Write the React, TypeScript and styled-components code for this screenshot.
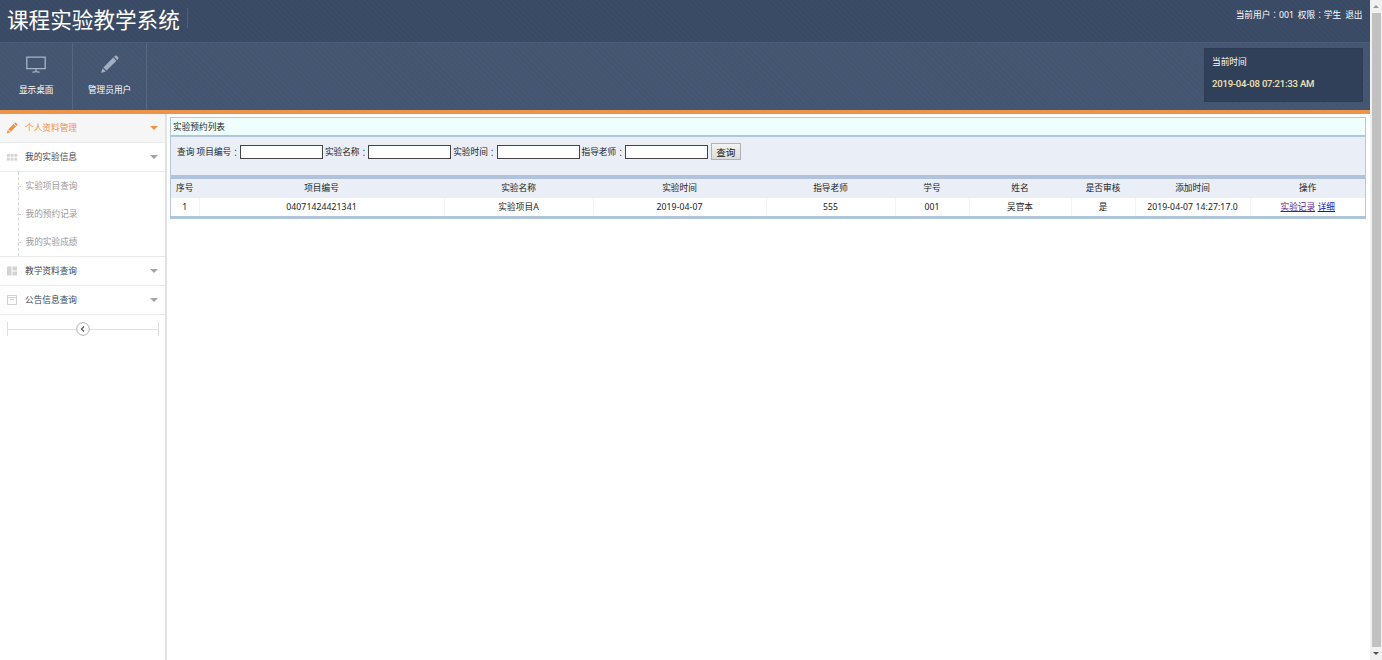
import React from "react";
import styled, { createGlobalStyle } from "styled-components";

const GlobalStyle = createGlobalStyle`
  * { box-sizing: border-box; }
  html, body { margin: 0; padding: 0; background: #fff; overflow: hidden; }
  body {
    font-family: "Noto Sans", "Noto Sans CJK SC", sans-serif;
    font-size: 8.67px;
    color: #222;
  }
`;

const Page = styled.div`
  display: flex;
  width: 1382px;
  height: 660px;
`;

const Workspace = styled.div`
  display: flex;
  flex-direction: column;
  width: 1370px;
`;

const TopBar = styled.header`
  display: flex;
  justify-content: space-between;
  height: 42px;
  color: #fff;
  background: repeating-linear-gradient(45deg, #3a4a65 0 2px, #3b4c67 2px 4px);
`;

const Title = styled.h1`
  margin: 8px 0 0;
  padding-left: 7px;
  width: 188px;
  height: 20px;
  border-right: 1px solid #4a5f82;
  font-size: 21.6px;
  font-weight: 400;
  line-height: 23px;
  white-space: nowrap;
`;

const UserInfo = styled.div`
  display: flex;
  align-items: baseline;
  gap: 4px;
  height: 22px;
  padding: 8px 7.500px 0 0;
  line-height: 13px;
`;

const Toolbar = styled.div`
  display: flex;
  height: 72px;
  border-top: 1px solid #4b5d7a;
  border-bottom: 4px solid #ee944a;
  background: repeating-linear-gradient(45deg, #445570 0 2px, #455773 2px 4px);
`;

const Tool = styled.button`
  display: flex;
  flex-direction: column;
  align-items: center;
  width: 73.4px;
  padding: 11px 0 0;
  border: 0;
  border-right: 1px solid #566781;
  background: transparent;
  color: #fff;
  font: inherit;
  line-height: 13px;
  svg { margin-bottom: 10px; }
`;

const Clock = styled.div`
  width: 159px;
  height: 54px;
  margin: 5px 7px 0 auto;
  padding: 7px 7px;
  border: 1px solid #2e3d55;
  background: #304059;
  color: #fff;
  line-height: 13px;
`;

const ClockTime = styled.div`
  margin-top: 8px;
  color: #f3e3b4;
  font: 500 9.6px/13px Roboto, sans-serif;
  letter-spacing: -0.24px;
  white-space: nowrap;
`;

const Body = styled.div`
  display: flex;
  flex: 1;
`;

const Sidebar = styled.nav`
  width: 167px;
  border-right: 2px solid #e2e2e4;
`;

const MenuItem = styled.div<{ $active?: boolean }>`
  display: flex;
  align-items: center;
  height: 29px;
  padding: 0 7px 0 6px;
  border-bottom: 1px solid #e9e9e9;
  background: ${(p) => (p.$active ? "#f6f6f6" : "#fff")};
  color: ${(p) => (p.$active ? "#f0923f" : "#414650")};
  svg { flex: none; }
`;

const MenuLabel = styled.span`
  flex: 1;
  margin-left: 7px;
  padding-top: 1px;
  line-height: 13px;
`;

const Caret = styled.i<{ $active?: boolean }>`
  border: 4px solid transparent;
  border-bottom: 0;
  border-top-color: ${(p) => (p.$active ? "#f0923f" : "#a3a3a3")};
`;

const SubMenu = styled.div`
  height: 85px;
  border-bottom: 1px solid #e9e9e9;
`;

const SubList = styled.div`
  margin-left: 18px;
  border-left: 1px dashed #d6d6d6;
`;

const SubItem = styled.div`
  display: flex;
  align-items: center;
  height: 28px;
  color: #999;
  line-height: 13px;
  &::before {
    content: "";
    width: 4px;
    margin-right: 2.5px;
    border-top: 1px dotted #ccc;
  }
`;

const Collapse = styled.div`
  display: flex;
  align-items: center;
  height: 14px;
  margin: 7px 6px 0 7px;
  border: solid #dcdcdc;
  border-width: 0 1px;
`;

const Rule = styled.span`
  flex: 1;
  height: 1px;
  background: #e2e2e2;
`;

const Main = styled.main`
  flex: 1;
  padding: 3px 4px 0 3px;
`;

const Panel = styled.section`
  border: 1px solid #b4c8de;
  border-bottom: 3px solid #b1c5d9;
`;

const PanelTitle = styled.div`
  height: 18px;
  padding-left: 2px;
  border-bottom: 1px solid #aec5dc;
  background: #effffd;
  line-height: 18px;
`;

const Search = styled.form`
  display: flex;
  align-items: flex-start;
  height: 43px;
  padding: 6px 0 0 6px;
  border-top: 1px solid #b4c8dc;
  border-bottom: 4px solid #b1c2dc;
  background: #e9eef7;
`;

const SearchLabel = styled.label`
  display: flex;
  align-items: center;
  height: 17px;
  margin-right: 2px;
  white-space: pre;
`;

const Colon = styled.span`
  font-family: "Noto Sans CJK TC", sans-serif;
`;

const Input = styled.input`
  width: 83px;
  height: 14px;
  margin: 0;
  padding: 0 2px;
  border: 1px solid #444;
  background: #fff;
  font: inherit;
`;

const SearchButton = styled.button`
  width: 30px;
  height: 17px;
  margin-left: 1px;
  padding: 0;
  border: 1px solid #b2b2b2;
  background: linear-gradient(#f3f3f3, #dcdcdc);
  color: #111;
  font: 9.6px/14px "Noto Sans CJK SC", sans-serif;
`;

const Row = styled.div<{ $head?: boolean }>`
  display: grid;
  grid-template-columns: 28.5px 245px 149px 173px 129px 74px 102px 64px 115px 1fr;
  height: ${(p) => (p.$head ? 19 : 18)}px;
  background: ${(p) => (p.$head ? "#e9eef7" : "#fff")};
`;

const Cell = styled.div<{ $line?: boolean }>`
  display: flex;
  justify-content: center;
  align-items: center;
  gap: 2.500px;
  line-height: 13px;
  letter-spacing: ${(p) => (p.$line ? "0.08px" : "0")};
  border-right: 1px solid ${(p) => (p.$line ? "#f1f3f5" : "transparent")};
  &:last-child { border-right: 0; }
`;

const Link = styled.a<{ $visited?: boolean }>`
  color: ${(p) => (p.$visited ? "#551a8b" : "#1515c8")};
  text-decoration: underline;
`;

const Scrollbar = styled.div`
  display: flex;
  flex-direction: column;
  align-items: center;
  justify-content: space-between;
  width: 12px;
  padding: 5px 0 5px;
  background: #f1f1f1;
`;

const Thumb = styled.div`
  width: 9px;
  height: 634px;
  background: #c1c1c1;
`;

const Arrow = styled.i<{ $up?: boolean }>`
  border: 3px solid transparent;
  ${(p) =>
    p.$up
      ? "border-top: 0; border-bottom-color: #999;"
      : "border-bottom: 0; border-top-color: #505050;"}
`;

const Monitor = () => (
  <svg width="22" height="20" viewBox="0 0 22 20" fill="none" stroke="#a9b4c5" strokeWidth="1.3">
    <path d="M1.800 3.100h18.400v11.600H1.800zM11 15v3M7.500 18.300q3.500-1.200 7 0" />
  </svg>
);

const ToolPencil = () => (
  <svg width="20" height="20" viewBox="0 0 20 20" fill="#a3afc1">
    <path d="M1 19l1.600-4.800 3.200 3.200zM3.400 13.400L13.200 3.600l3.200 3.200L6.600 16.600zM14 2.800l1-1q.900-.7 1.700 0l1.500 1.500q.700.800 0 1.700l-1 1z" />
  </svg>
);

const MenuPencil = () => (
  <svg width="12" height="12" viewBox="0 0 20 20" fill="#f0923f">
    <path d="M1 19l2-6 4 4zM3.900 12.100L12.600 3.400l4 4L7.900 16.100zM13.500 2.500l1.200-1.200q1-.8 2 0l2 2q.8 1 0 2l-1.200 1.200z" />
  </svg>
);

const GridIcon = () => (
  <svg width="12" height="12" viewBox="0 0 12 12" fill="#d3d3d3">
    {[3, 6.8].map((y) => [1, 4.7, 8.4].map((x) => <rect key={`${x}-${y}`} x={x} y={y} width="2.8" height="2.8" />))}
  </svg>
);

const BlocksIcon = () => (
  <svg width="12" height="12" viewBox="0 0 12 12" fill="#d3d3d3">
    <path d="M1 1.500h4.500v9H1zM6.500 1.500H11v4H6.500zM6.500 6.500H11v4H6.500z" />
  </svg>
);

const NoticeIcon = () => (
  <svg width="12" height="12" viewBox="0 0 12 12" fill="none" stroke="#d0d0d0">
    <path d="M1.500 1.500h9v9h-9zM1.500 3.500h9M4 5.500h4" />
  </svg>
);

const columns = ["序号", "项目编号", "实验名称", "实验时间", "指导老师", "学号", "姓名", "是否审核", "添加时间", "操作"];
const record = ["1", "04071424421341", "实验项目A", "2019-04-07", "555", "001", "吴官本", "是", "2019-04-07 14:27:17.0"];
const filters = ["查询 项目编号", "实验名称", "实验时间", "指导老师"];
const subItems = ["实验项目查询", "我的预约记录", "我的实验成绩"];

function Menu({ icon, label, active }: { icon: React.ReactNode; label: string; active?: boolean }) {
  return (
    <MenuItem $active={active}>
      {icon}
      <MenuLabel>{label}</MenuLabel>
      <Caret $active={active} />
    </MenuItem>
  );
}

export default function App() {
  return (
    <Page>
      <GlobalStyle />
      <Workspace>
        <TopBar>
          <Title>课程实验教学系统</Title>
          <UserInfo>
            <span>当前用户<Colon>：</Colon>001</span>
            <span>权限<Colon>：</Colon>学生</span>
            <span>退出</span>
          </UserInfo>
        </TopBar>
        <Toolbar>
          <Tool><Monitor />显示桌面</Tool>
          <Tool><ToolPencil />管理员用户</Tool>
          <Clock>
            当前时间
            <ClockTime>2019-04-08 07:21:33 AM</ClockTime>
          </Clock>
        </Toolbar>
        <Body>
          <Sidebar>
            <Menu active icon={<MenuPencil />} label="个人资料管理" />
            <Menu icon={<GridIcon />} label="我的实验信息" />
            <SubMenu>
              <SubList>
                {subItems.map((s) => <SubItem key={s}>{s}</SubItem>)}
              </SubList>
            </SubMenu>
            <Menu icon={<BlocksIcon />} label="教学资料查询" />
            <Menu icon={<NoticeIcon />} label="公告信息查询" />
            <Collapse>
              <Rule />
              <svg width="14" height="14" viewBox="0 0 14 14" fill="none" stroke="#b0b0b0">
                <circle cx="7" cy="7" r="6.300" />
                <path d="M8 4.500L5.500 7 8 9.500" stroke="#555" strokeWidth="1.200" />
              </svg>
              <Rule />
            </Collapse>
          </Sidebar>
          <Main>
            <Panel>
              <PanelTitle>实验预约列表</PanelTitle>
              <Search>
                {filters.map((f) => (
                  <SearchLabel key={f}>{f}<Colon>：</Colon><Input /></SearchLabel>
                ))}
                <SearchButton type="button">查询</SearchButton>
              </Search>
              <Row $head>
                {columns.map((c) => <Cell key={c}>{c}</Cell>)}
              </Row>
              <Row>
                {record.map((v) => <Cell key={v} $line>{v}</Cell>)}
                <Cell>
                  <Link $visited>实验记录</Link>
                  <Link>详细</Link>
                </Cell>
              </Row>
            </Panel>
          </Main>
        </Body>
      </Workspace>
      <Scrollbar>
        <Arrow $up />
        <Thumb />
        <Arrow />
      </Scrollbar>
    </Page>
  );
}
